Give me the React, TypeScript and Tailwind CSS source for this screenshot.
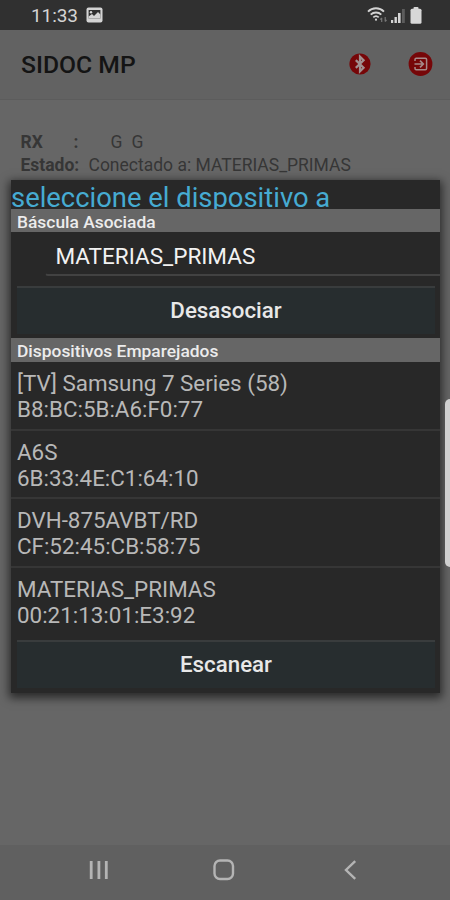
import type { ReactNode } from "react";

const devices = [
  { name: "[TV] Samsung 7 Series (58)", mac: "B8:BC:5B:A6:F0:77" },
  { name: "A6S", mac: "6B:33:4E:C1:64:10" },
  { name: "DVH-875AVBT/RD", mac: "CF:52:45:CB:58:75" },
  { name: "MATERIAS_PRIMAS", mac: "00:21:13:01:E3:92" },
];

function StatusBar() {
  return (
    <div className="h-[30px] shrink-0 bg-[#303030] flex items-center pl-[31px] pr-[28px] text-[#d4d4d4]">
      <span className="text-[19px] leading-[28px] tracking-[-0.1px] pt-[2px]">11:33</span>
      <svg className="ml-[8px]" width="17" height="16" viewBox="0 0 17 16">
        <rect x="0.5" y="0.5" width="16" height="15" rx="2" fill="#d4d4d4" />
        <rect x="2.6" y="3" width="11.8" height="8.5" fill="#303030" />
        <path d="M2.6 11.5V9.5L6 7l2 2 4-4 2.4 2.5v4z" fill="#d4d4d4" />
        <circle cx="5" cy="5.2" r="1.2" fill="#d4d4d4" />
      </svg>

      {/* WIFI / SIGNAL / BATTERY */}
      <div className="ml-auto flex items-center">
        <svg width="20" height="17" viewBox="0 0 20 17" fill="none" stroke="#d4d4d4">
          <path d="M1 4.6C5.4.2 12.6.2 17 4.6" strokeWidth="1.9" />
          <path d="M3.7 7.6c3-2.9 7.6-2.9 10.6 0" strokeWidth="1.9" />
          <path d="M6.3 10.3c1.6-1.5 3.8-1.5 5.4 0" strokeWidth="1.7" />
          <circle cx="9" cy="12.7" r="1.1" fill="#d4d4d4" stroke="none" />
          <path d="M14.7 15v-4m-1.4 1.6 1.4-1.6M18.2 10v4.5m1.3-1.6-1.3 1.6" stroke="#777" strokeWidth="1.2" />
        </svg>
        <svg className="ml-[4px] mt-[1px]" width="15" height="15" viewBox="0 0 15 15" fill="#d4d4d4">
          <rect x="0" y="12" width="2.2" height="3" />
          <rect x="3.5" y="9" width="2.4" height="6" />
          <rect x="7" y="5" width="2.6" height="10" />
          <rect x="11" y="1" width="2.8" height="14" fill="#5c5c5c" />
        </svg>
        <svg className="ml-[4px]" width="12" height="17" viewBox="0 0 12 17" fill="#d8d8d8">
          <rect x="3.5" y="0" width="5" height="4" rx="1" />
          <rect x="0.5" y="1.8" width="11" height="15" rx="1.5" />
        </svg>
      </div>
    </div>
  );
}

function AppBar() {
  return (
    <div className="h-[70px] shrink-0 bg-[#626262] border-b border-[#5c5c5c] flex items-center pl-[21px] pr-[17px]">
      <h1 className="text-[24.7px] leading-[28px] font-medium text-[#141414] whitespace-nowrap">
        SIDOC MP
      </h1>
      <div className="ml-auto flex items-center gap-[37px] pb-[1px]">
        <svg width="22" height="24" viewBox="0 0 22 24" fill="none">
          <circle cx="11" cy="12" r="10.6" fill="#760608" />
          <path d="M6.8 8.1 14.6 15.8 11 19.3V4.7l3.6 3.5L6.8 15.9" stroke="#a09090" strokeWidth="2.2" />
        </svg>
        <svg width="25" height="24" viewBox="0 0 25 24" fill="none">
          <circle cx="12.5" cy="12" r="11.9" fill="#760608" />
          <path
            d="M7 9V7.5Q7 6.3 8.2 6.3h9.2q1.2 0 1.2 1.2v9q0 1.2-1.2 1.2H8.2Q7 17.7 7 16.5V15"
            stroke="#a58888"
            strokeWidth="1.5"
          />
          <path d="M6.5 12H14.5M12 8.7 15.3 12 12 15.3" stroke="#a58888" strokeWidth="1.7" />
        </svg>
      </div>
    </div>
  );
}

function SectionTitle({ children }: { children: ReactNode }) {
  return (
    <h2 className="h-full flex items-center bg-[#666666] pl-[6px] pt-[2px] text-[17.4px] leading-[20px] font-medium text-[#ececec] whitespace-nowrap">
      {children}
    </h2>
  );
}

function DialogButton({ label }: { label: string }) {
  return (
    <button className="block w-[418px] h-[48px] ml-[6px] bg-[#272d2f] border-t-2 border-[#393c3d] text-[22.3px] font-medium text-[#e8e8e8]">
      {label}
    </button>
  );
}

function DeviceDialog() {
  return (
    <div className="absolute left-[11px] top-[180px] w-[429px] h-[513px] bg-[#282828] shadow-[0_3px_9px_2px_rgba(0,0,0,0.6)] flex flex-col">
      <div className="h-[29px] overflow-hidden text-[27.4px] leading-[37px] text-[#46abd2] whitespace-nowrap">
        seleccione el dispositivo a
      </div>

      <div className="h-[23px]">
        <SectionTitle>Báscula Asociada</SectionTitle>
      </div>
      <div className="h-[54px]">
        <div className="ml-[34px] h-[44px] pl-[9.5px] border-b-2 border-l border-[#424242] rounded-bl-[3px] [border-left-color:transparent] text-[22.5px] leading-[49px] text-[#f2f2f2]">
          MATERIAS_PRIMAS
        </div>
      </div>
      <div className="h-[52px]">
        <DialogButton label="Desasociar" />
      </div>

      <div className="h-[24px]">
        <SectionTitle>Dispositivos Emparejados</SectionTitle>
      </div>
      <ul className="h-[278px]">
        {devices.map((d) => (
          <li
            key={d.mac}
            className="h-[68.5px] pt-[8px] pl-[6px] border-b-2 border-[#363636] last:border-b-0 text-[22.4px] leading-[26px] text-[#b8b8b8] whitespace-nowrap"
          >
            <p>{d.name}</p>
            <p>{d.mac}</p>
          </li>
        ))}
      </ul>
      <DialogButton label="Escanear" />
    </div>
  );
}

function NavBar() {
  return (
    <div className="h-[55px] shrink-0 bg-[#606060] flex items-center justify-between pl-[88px] pr-[93px] pb-[5px]">
      <svg width="20" height="20" viewBox="0 0 20 20" stroke="#b4b4b4" strokeWidth="2.8">
        <path d="M3.2 1v18M10.9 1v18M18.3 1v18" />
      </svg>
      <svg className="mr-[3px]" width="22" height="22" viewBox="0 0 22 22" fill="none" stroke="#b4b4b4" strokeWidth="2.4">
        <rect x="1.5" y="1.5" width="18.5" height="18.5" rx="5.5" />
      </svg>
      <svg width="14" height="20" viewBox="0 0 14 20" fill="none" stroke="#b4b4b4" strokeWidth="2.4">
        <path d="M12.2 1.2 3 10l9.2 8.8" />
      </svg>
    </div>
  );
}

export default function App() {
  return (
    <div className="relative w-[450px] h-[900px] overflow-hidden bg-[#666666] flex flex-col font-[Roboto,sans-serif]">
      <StatusBar />
      <AppBar />

      <main className="flex-1 pt-[31px] pl-[20.5px] text-[17.5px] leading-[23px] text-[#363636] whitespace-nowrap">
        <div className="flex">
          <b className="w-[53px] font-bold">RX</b>
          <b className="w-[37px] font-bold">:</b>
          <span className="w-[21px]">G</span>
          <span>G</span>
        </div>
        <div className="flex">
          <b className="w-[68px] font-bold">Estado:</b>
          <span>Conectado a: MATERIAS_PRIMAS</span>
        </div>
      </main>

      <NavBar />
      <DeviceDialog />

      {/* edge panel handle */}
      <div className="absolute right-0 top-[399px] w-[5px] h-[168px] rounded-l-[5px] bg-[#cfcfcf]" />
    </div>
  );
}
